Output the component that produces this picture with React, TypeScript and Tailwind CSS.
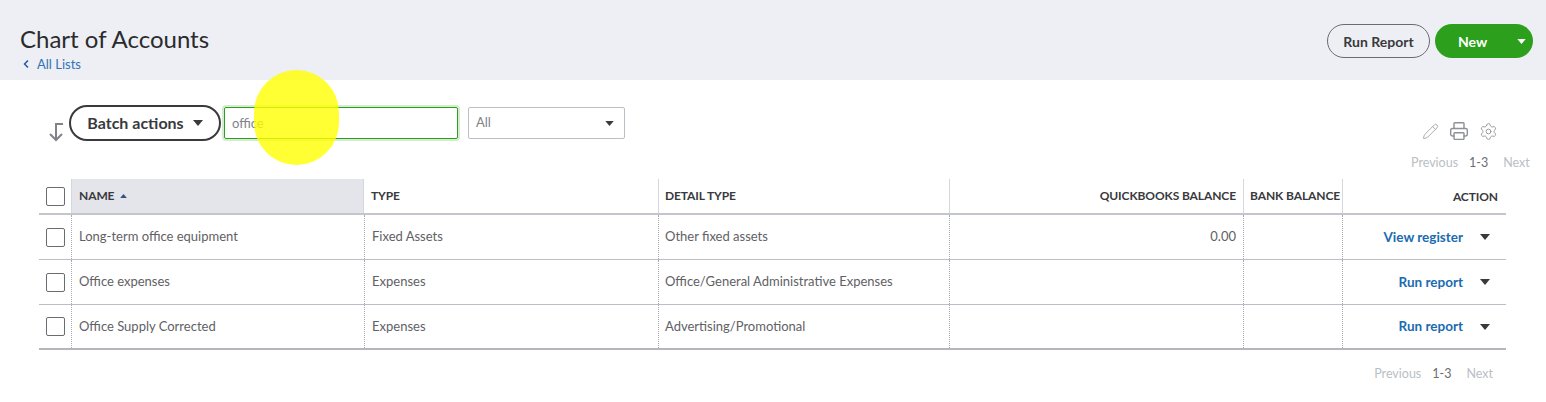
import { Pencil, Printer, Settings, ChevronLeft } from "lucide-react";

const font = "font-['Lato','Liberation_Sans',sans-serif]";
const grid = "grid grid-cols-[32px_293px_294px_291px_294px_99px_164px]";
const dotted = "border-l border-dotted border-[#a8abb0]";

interface Row {
	name: string;
	type: string;
	detail: string;
	balance: string;
	action: string;
}

const rows: Row[] = [
	{
		name: "Long-term office equipment",
		type: "Fixed Assets",
		detail: "Other fixed assets",
		balance: "0.00",
		action: "View register",
	},
	{
		name: "Office expenses",
		type: "Expenses",
		detail: "Office/General Administrative Expenses",
		balance: "",
		action: "Run report",
	},
	{
		name: "Office Supply Corrected",
		type: "Expenses",
		detail: "Advertising/Promotional",
		balance: "",
		action: "Run report",
	},
];

function Caret({ className }: { className: string }) {
	return (
		<svg viewBox="0 0 10 6" className={className} fill="currentColor">
			<path d="M0 0h10L5 6z" />
		</svg>
	);
}

function Check() {
	return <div className="size-[19px] rounded-[2px] border border-[#6b6c72] bg-white" />;
}

function Pager({ className }: { className: string }) {
	return (
		<div className={`flex text-[12.5px] text-[#babec5] ${className}`}>
			<span>Previous</span>
			<span className="ml-[11px] text-[#6b6c72]">1-3</span>
			<span className="ml-[15px]">Next</span>
		</div>
	);
}

export default function App() {
	return (
		<div className={`relative h-[402px] w-[1546px] overflow-hidden bg-white ${font}`}>
			<header className="flex h-20 justify-between bg-[#eeeff4] pl-5 pr-[13px]">
				<div>
					<h1 className="mt-[23px] text-[24px] leading-8 text-[#2a2b2e]">Chart of Accounts</h1>
					<a className="mt-[1px] flex items-center text-[13px] leading-4 text-[#2f74b8]">
						<ChevronLeft size={12} strokeWidth={3.5} className="mr-[5px] text-[#2e5ea8]" />
						All Lists
					</a>
				</div>
				<div className="mt-6 flex gap-[5px]">
					<button
						type="button"
						className="h-[34px] w-[103px] rounded-full border border-[#6b6c72] text-[14px] font-bold text-[#393a3d]"
					>
						Run Report
					</button>
					<button
						type="button"
						className="flex h-[34px] w-[98px] items-center rounded-full bg-[#2ca01c] text-[14px] font-bold text-white"
					>
						<span className="ml-[23px]">New</span>
						<Caret className="ml-[30px] h-[5px] w-[9px]" />
					</button>
				</div>
			</header>

			<section className="flex h-[99px] justify-between pl-[48px] pr-[48px]">
				<div className="mt-[25px] flex items-start">
					<svg viewBox="0 0 16 20" className="mt-[17px] h-5 w-4 text-[#808287]" fill="none" stroke="currentColor" strokeWidth="2">
						<path d="M15 2H8v16M2 12l6 6 6-6" />
					</svg>
					<button
						type="button"
						className="ml-[5px] flex h-[36px] w-[152px] items-center justify-center rounded-full border-2 border-[#393a3d] text-[16px] font-bold text-[#393a3d]"
					>
						Batch actions
						<Caret className="ml-[9px] h-[6px] w-[10px]" />
					</button>
					<input
						readOnly
						value="office"
						className="mt-[2px] ml-[3px] h-8 w-[234px] rounded-[2px] border border-[#2ca01c] pl-[7px] text-[13px] text-[#808287] shadow-[0_0_0_2px_#d5ecd1] outline-none"
					/>
					<div className="mt-[2px] ml-[10px] flex h-8 w-[157px] items-center justify-between rounded-[2px] border border-[#babec5] pl-[7px] pr-[10px] text-[13px] text-[#808287]">
						All
						<Caret className="h-[5px] w-[9px] text-[#393a3d]" />
					</div>
				</div>
				<div className="mt-[41px] flex flex-col items-end">
					<div className="flex items-center gap-[10px] text-[#8d9096]">
						<Pencil size={17} strokeWidth={1.4} className="text-[#a8abb0]" />
						<Printer size={20} strokeWidth={1.7} />
						<Settings size={19} strokeWidth={1.1} />
					</div>
					<Pager className="mt-[13px] mr-[-43px] w-[130px]" />
				</div>
			</section>

			<div className="ml-[39px] w-[1467px]">
				<div className={`${grid} h-[36px] border-b-[2px] border-[#c4c6cd] text-[12px] font-bold tracking-[-0.1px] text-[#393a3d]`}>
					<div className="flex items-center pl-[7px]">
						<Check />
					</div>
					<div className="flex items-center gap-[6px] border-x border-[#d4d7dc] bg-[#e3e5eb] pl-[7px]">
						NAME
						<Caret className="h-[4px] w-[7px] rotate-180 text-[#37507a]" />
					</div>
					<div className="flex items-center pl-[7px]">TYPE</div>
					<div className="flex items-center border-l border-[#d4d7dc] pl-[6px]">DETAIL TYPE</div>
					<div className="flex items-center justify-end border-l border-[#d4d7dc] pr-[7px]">QUICKBOOKS BALANCE</div>
					<div className="flex items-center border-l border-[#d4d7dc] pl-[6px]">BANK BALANCE</div>
					<div className="flex items-center justify-end border-l border-[#d4d7dc] pt-[2px] pr-2">ACTION</div>
				</div>
				{rows.map((row, index) => (
					<div
						key={row.name}
						className={`${grid} h-[45px] text-[13px] text-[#5f6165] ${
							index === rows.length - 1 ? "border-b-[2px] border-[#b4b6bc]" : "border-b border-[#babec5]"
						}`}
					>
						<div className="flex items-center pl-[7px]">
							<Check />
						</div>
						<div className={`flex items-center pl-[7px] ${dotted}`}>{row.name}</div>
						<div className={`flex items-center pl-[7px] ${dotted}`}>{row.type}</div>
						<div className={`flex items-center pl-[6px] ${dotted}`}>{row.detail}</div>
						<div className={`flex items-center justify-end pr-[7px] ${dotted}`}>{row.balance}</div>
						<div className={dotted} />
						<div className={`flex items-center justify-end pr-[16px] ${dotted}`}>
							<span className="text-[13.5px] font-bold text-[#1a6bb0]">{row.action}</span>
							<Caret className="ml-[17px] h-[6px] w-[10px] text-[#393a3d]" />
						</div>
					</div>
				))}
			</div>
			<div className="flex justify-end pr-[53px] pt-[15px]">
				<Pager className="" />
			</div>

			<div className="absolute left-[254px] top-[70px] h-[95px] w-[85px] rounded-full bg-[#ffff00]/80" />
		</div>
	);
}
